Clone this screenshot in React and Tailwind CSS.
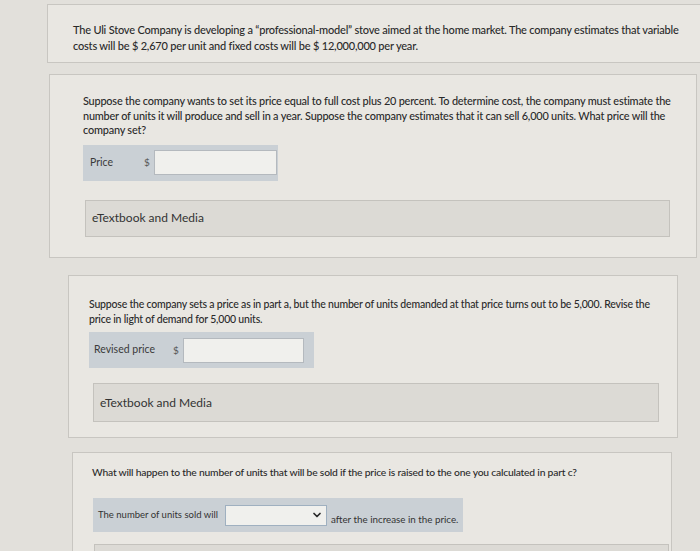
import { ChevronDown } from 'lucide-react';

const font = { fontFamily: 'Lato, "Open Sans", sans-serif' };

const Media = ({ className }) => (
  <div className={`border border-[#c4c2bd] bg-[#dcdad5] flex items-center ${className}`}>
    <span className="text-[12px] text-[#333]">eTextbook and Media</span>
  </div>
);

const App = () => {
  return (
    <div className="w-[700px] h-[551px] overflow-hidden bg-[#e2e0db] text-[#2a2a2a]" style={font}>
      <div className="flex flex-col pt-[4px]">
        {/* intro */}
        <div className="ml-[47px] mr-[-10px] h-[59px] border border-[#c8c6c1] bg-[#e9e7e2] pl-[25px] pt-[17px]">
          <p className="text-[11px] leading-[16px] font-medium tracking-[-0.2px]">
            The Uli Stove Company is developing a “professional-model” stove aimed at the home market. The company estimates that variable
            <br />
            costs will be $ 2,670 per unit and fixed costs will be $ 12,000,000 per year.
          </p>
        </div>

        {/* part a */}
        <div className="ml-[49px] mr-[3px] mt-[11px] h-[184px] border border-[#c8c6c1] bg-[#e9e7e2] pl-[33px] pr-[20px] pt-[19px]">
          <p className="text-[10.9px] leading-[14.5px] font-medium tracking-[-0.2px]">
            Suppose the company wants to set its price equal to full cost plus 20 percent. To determine cost, the company must estimate the
            <br />
            number of units it will produce and sell in a year. Suppose the company estimates that it can sell 6,000 units. What price will the
            <br />
            company set?
          </p>
          <div className="mt-[7px] w-[195px] h-[36px] bg-[#cad0d5] flex items-center pl-[7px]">
            <span className="text-[10.5px] text-[#3a3a3a]">Price</span>
            <span className="ml-[31px] text-[10px] text-[#555]">$</span>
            <div className="ml-[4px] w-[123px] h-[25px] border border-[#b4b9be] bg-[#f0f0ed]" />
          </div>
          <Media className="mt-[19px] ml-[2px] mr-[6px] h-[37px] pl-[6px]" />
        </div>

        {/* part c */}
        <div className="ml-[68px] mr-[22px] mt-[17px] h-[163px] border border-[#c8c6c1] bg-[#e9e7e2] pl-[20px] pr-[10px] pt-[21px]">
          <p className="text-[10.5px] leading-[15px] font-medium tracking-[-0.2px]">
            Suppose the company sets a price as in part a, but the number of units demanded at that price turns out to be 5,000. Revise the
            <br />
            price in light of demand for 5,000 units.
          </p>
          <div className="mt-[5px] w-[225px] h-[36px] bg-[#cad0d5] flex items-center pl-[5px]">
            <span className="text-[10.5px] text-[#3a3a3a]">Revised price</span>
            <span className="ml-[18px] text-[10px] text-[#555]">$</span>
            <div className="ml-[4px] w-[121px] h-[25px] border border-[#b4b9be] bg-[#f0f0ed]" />
          </div>
          <Media className="mt-[15px] ml-[4px] mr-[8px] h-[39px] pl-[6px]" />
        </div>

        {/* part d */}
        <div className="ml-[72px] mr-[28px] mt-[14px] h-[120px] border border-[#c8c6c1] bg-[#e9e7e2] pl-[19px] pt-[12px]">
          <p className="text-[10.3px] leading-[14px] font-medium tracking-[-0.2px]">
            What will happen to the number of units that will be sold if the price is raised to the one you calculated in part c?
          </p>
          <div className="mt-[19px] ml-[1px] w-[370px] h-[34px] bg-[#cad0d5] flex items-center pl-[5px]">
            <span className="text-[9.5px] text-[#333]">The number of units sold will</span>
            <div className="ml-[7px] w-[102px] h-[21px] border border-[#9fb0c0] bg-[#f0f0ed] flex items-center justify-end pr-[3px]">
              <ChevronDown size={12} strokeWidth={3.5} className="text-[#2a2a2a]" />
            </div>
            <span className="ml-[4px] mt-[8px] text-[9.8px] text-[#333]">after the increase in the price.</span>
          </div>
          <div className="mt-[12px] ml-[2px] mr-[2px] h-[30px] border border-[#c4c2bd] bg-[#dcdad5]" />
        </div>
      </div>
    </div>
  );
};

export default App;
